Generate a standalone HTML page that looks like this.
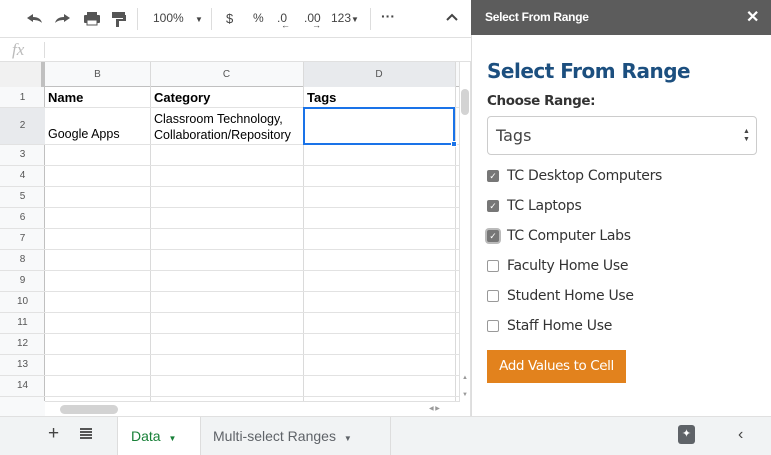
<!DOCTYPE html>
<html><head><meta charset="utf-8"><style>
*{box-sizing:border-box;margin:0;padding:0}
body{width:771px;height:455px;overflow:hidden;background:#fff;font-family:"Liberation Sans",Arial,sans-serif;position:relative}
.a{position:absolute}
.rn{position:absolute;left:0;width:45px;text-align:center;font-size:10px;color:#555}
.hl{position:absolute;left:0;width:460px;height:1px;background:#e2e2e2}
.vl{position:absolute;width:1px;background:#e2e2e2}
.cb{position:absolute;left:487px;width:12px;height:12px;border:1px solid #999;border-radius:2px;background:#fff}
.cb.on{background:#777;border-color:#777;color:#fff;font-size:9px;line-height:10px;text-align:center}
.lb{position:absolute;left:507px;font-size:14px;color:#333;font-family:"DejaVu Sans","Liberation Sans",sans-serif;letter-spacing:-0.3px}
.tb{position:absolute;top:11px;font-size:13px;color:#444}
</style></head><body>
<div class="a" style="left:0;top:0;width:471px;height:38px;background:#fff;border-bottom:1px solid #e0e0e0"></div>
<svg class="a" style="left:24px;top:9px" width="110" height="20" viewBox="0 0 110 20" fill="#555">
<path d="M3 9 L9 5 L9 8 C14 8 17 10 18 14 C16 12 13 11 9 11 L9 13 Z"/>
<path d="M46 9 L40 5 L40 8 C35 8 32 10 31 14 C33 12 36 11 40 11 L40 13 Z"/>
<rect x="60" y="6" width="16" height="8" rx="1"/><rect x="63" y="3" width="10" height="3"/><rect x="63" y="11" width="10" height="5" fill="#fff" stroke="#555"/>
<rect x="88" y="3" width="13" height="6"/><rect x="99" y="6" width="3" height="5"/><rect x="92" y="10" width="3" height="8"/><rect x="92" y="10" width="10" height="2"/>
</svg>
<div class="a" style="left:137px;top:8px;width:1px;height:22px;background:#ddd"></div>
<div class="tb" style="left:153px;font-size:12px">100%</div>
<div class="tb" style="left:195px;font-size:8px;top:15px">▼</div>
<div class="a" style="left:211px;top:8px;width:1px;height:22px;background:#ddd"></div>
<div class="tb" style="left:226px">$</div>
<div class="tb" style="left:253px;font-size:12px">%</div>
<div class="tb" style="left:277px;font-size:12px">.0<span style="position:absolute;left:4px;top:9px;font-size:9px">←</span></div>
<div class="tb" style="left:304px;font-size:12px">.00<span style="position:absolute;left:8px;top:9px;font-size:9px">→</span></div>
<div class="tb" style="left:331px;font-size:12px">123<span style="font-size:8px">▼</span></div>
<div class="a" style="left:370px;top:8px;width:1px;height:22px;background:#ddd"></div>
<div class="tb" style="left:381px;top:8px;font-size:14px;font-weight:bold">···</div>
<svg class="a" style="left:445px;top:12px" width="14" height="10"><path d="M2 8 L7 3 L12 8" stroke="#444" stroke-width="2" fill="none"/></svg>
<div class="a" style="left:0;top:38px;width:471px;height:24px;border-bottom:1px solid #e0e0e0"></div>
<div class="a" style="left:12px;top:40px;font-family:'Liberation Serif',serif;font-style:italic;font-size:17px;color:#bbb">fx</div>
<div class="a" style="left:44px;top:42px;width:1px;height:16px;background:#ddd"></div>
<div class="a" style="left:0;top:62px;width:460px;height:25px;background:#f8f9fa;border-bottom:1px solid #c0c0c0"></div>
<div class="a" style="left:0;top:62px;width:45px;height:25px;background:#f1f1f1;border-right:4px solid #c0c0c0"></div>
<div class="a" style="left:303px;top:62px;width:152px;height:25px;background:#e8eaed"></div>
<div class="a" style="left:45px;top:69px;width:105px;text-align:center;font-size:10px;color:#555">B</div>
<div class="a" style="left:150px;top:69px;width:153px;text-align:center;font-size:10px;color:#555">C</div>
<div class="a" style="left:303px;top:69px;width:152px;text-align:center;font-size:10px;color:#555">D</div>
<div class="a" style="left:0;top:87px;width:45px;height:314px;background:#f8f9fa;border-right:1px solid #c0c0c0"></div>
<div class="a" style="left:0;top:107px;width:45px;height:38px;background:#e8eaed"></div>
<div class="vl" style="left:150px;top:62px;height:339px;background:#dadada"></div>
<div class="vl" style="left:303px;top:62px;height:339px;background:#dadada"></div>
<div class="vl" style="left:455px;top:62px;height:339px;background:#dadada"></div>
<div class="hl" style="top:107px"></div>
<div class="hl" style="top:144px"></div>
<div class="hl" style="top:165px"></div><div class="hl" style="top:186px"></div><div class="hl" style="top:207px"></div><div class="hl" style="top:228px"></div><div class="hl" style="top:249px"></div><div class="hl" style="top:270px"></div><div class="hl" style="top:291px"></div><div class="hl" style="top:312px"></div><div class="hl" style="top:333px"></div><div class="hl" style="top:354px"></div><div class="hl" style="top:375px"></div><div class="hl" style="top:396px"></div>
<div class="rn" style="top:92px">1</div><div class="rn" style="top:120px">2</div>
<div class="rn" style="top:149px">3</div><div class="rn" style="top:170px">4</div><div class="rn" style="top:191px">5</div><div class="rn" style="top:212px">6</div><div class="rn" style="top:233px">7</div><div class="rn" style="top:254px">8</div><div class="rn" style="top:275px">9</div><div class="rn" style="top:296px">10</div><div class="rn" style="top:317px">11</div><div class="rn" style="top:338px">12</div><div class="rn" style="top:359px">13</div><div class="rn" style="top:380px">14</div>
<div class="a" style="left:48px;top:90px;font-size:13px;font-weight:bold">Name</div>
<div class="a" style="left:154px;top:90px;font-size:13px;font-weight:bold">Category</div>
<div class="a" style="left:307px;top:90px;font-size:13px;font-weight:bold">Tags</div>
<div class="a" style="left:48px;top:127px;font-size:12.5px">Google Apps</div>
<div class="a" style="left:154px;top:111px;font-size:12.5px;line-height:16px">Classroom Technology,<br>Collaboration/Repository</div>
<div class="a" style="left:303px;top:107px;width:152px;height:38px;border:2px solid #1a73e8"></div>
<div class="a" style="left:451px;top:141px;width:6px;height:6px;background:#1a73e8;border:1px solid #fff"></div>
<div class="a" style="left:459px;top:62px;width:12px;height:354px;background:#fff;border-left:1px solid #e0e0e0;border-right:1px solid #e0e0e0"></div>
<div class="a" style="left:461px;top:89px;width:8px;height:26px;background:#d3d3d3;border-radius:4px"></div>
<div class="a" style="left:462px;top:375px;font-size:6px;color:#999">▲</div>
<div class="a" style="left:462px;top:392px;font-size:6px;color:#999">▼</div>
<div class="a" style="left:0;top:401px;width:460px;height:15px;background:#fff;border-top:1px solid #e0e0e0"></div>
<div class="a" style="left:0;top:401px;width:45px;height:15px;background:#f8f9fa"></div>
<div class="a" style="left:60px;top:405px;width:58px;height:9px;background:#d3d3d3;border-radius:5px"></div>
<div class="a" style="left:429px;top:405px;font-size:6px;color:#999">◀ ▶</div>
<div class="a" style="left:0;top:416px;width:771px;height:39px;background:#f1f3f4;border-top:1px solid #e0e0e0"></div>
<div class="a" style="left:48px;top:423px;font-size:19px;color:#444">+</div>
<div class="a" style="left:80px;top:428px;width:12px;height:2px;background:#555;box-shadow:0 3px 0 #555,0 6px 0 #555,0 9px 0 #555"></div>
<div class="a" style="left:117px;top:417px;width:84px;height:38px;background:#fff;border-left:1px solid #ddd;border-right:1px solid #ddd"></div>
<div class="a" style="left:131px;top:428px;font-size:14px;color:#188038">Data <span style="font-size:8px;margin-left:4px">▼</span></div>
<div class="a" style="left:213px;top:428px;font-size:14px;color:#5f6368">Multi-select Ranges <span style="font-size:8px;margin-left:4px">▼</span></div>
<div class="a" style="left:390px;top:417px;width:1px;height:38px;background:#ddd"></div>
<div class="a" style="left:678px;top:425px;width:17px;height:19px;background:#5f6368;border-radius:3px;color:#fff;font-size:11px;text-align:center;line-height:19px">✦</div>
<div class="a" style="left:738px;top:426px;font-size:16px;color:#444">‹</div>
<div class="a" style="left:471px;top:0;width:300px;height:416px;background:#fff;border-left:1px solid #ddd"></div>
<div class="a" style="left:471px;top:0;width:300px;height:35px;background:#5c5c5c"></div>
<div class="a" style="left:485px;top:10px;font-size:12px;font-weight:bold;color:#fff;letter-spacing:-0.3px">Select From Range</div>
<div class="a" style="left:746px;top:7px;font-size:16px;font-weight:bold;color:#fff">✕</div>
<div class="a" style="left:487px;top:59px;font-size:20px;font-weight:bold;color:#1c4f7f;font-family:'DejaVu Sans',sans-serif;letter-spacing:-0.5px">Select From Range</div>
<div class="a" style="left:487px;top:93px;font-size:13.5px;font-weight:bold;color:#333;font-family:'DejaVu Sans',sans-serif;letter-spacing:-0.4px">Choose Range:</div>
<div class="a" style="left:487px;top:116px;width:270px;height:39px;border:1px solid #ccc;border-radius:4px"></div>
<div class="a" style="left:496px;top:126px;font-size:16px;color:#444;font-family:'DejaVu Sans',sans-serif">Tags</div>
<div class="a" style="left:743px;top:128px;font-size:7px;line-height:8px;color:#444">▲<br>▼</div>
<div class="cb on" style="top:170px">✓</div><div class="lb" style="top:168px">TC Desktop Computers</div>
<div class="cb on" style="top:200px">✓</div><div class="lb" style="top:198px">TC Laptops</div>
<div class="cb on" style="top:230px;box-shadow:0 0 0 2px #bbb">✓</div><div class="lb" style="top:228px">TC Computer Labs</div>
<div class="cb" style="top:260px"></div><div class="lb" style="top:258px">Faculty Home Use</div>
<div class="cb" style="top:290px"></div><div class="lb" style="top:288px">Student Home Use</div>
<div class="cb" style="top:320px"></div><div class="lb" style="top:318px">Staff Home Use</div>
<div class="a" style="left:487px;top:350px;width:139px;height:33px;background:#e2821d;color:#fff;font-size:13.5px;text-align:center;line-height:33px;font-family:'DejaVu Sans',sans-serif;letter-spacing:-0.4px">Add Values to Cell</div>
</body></html>
